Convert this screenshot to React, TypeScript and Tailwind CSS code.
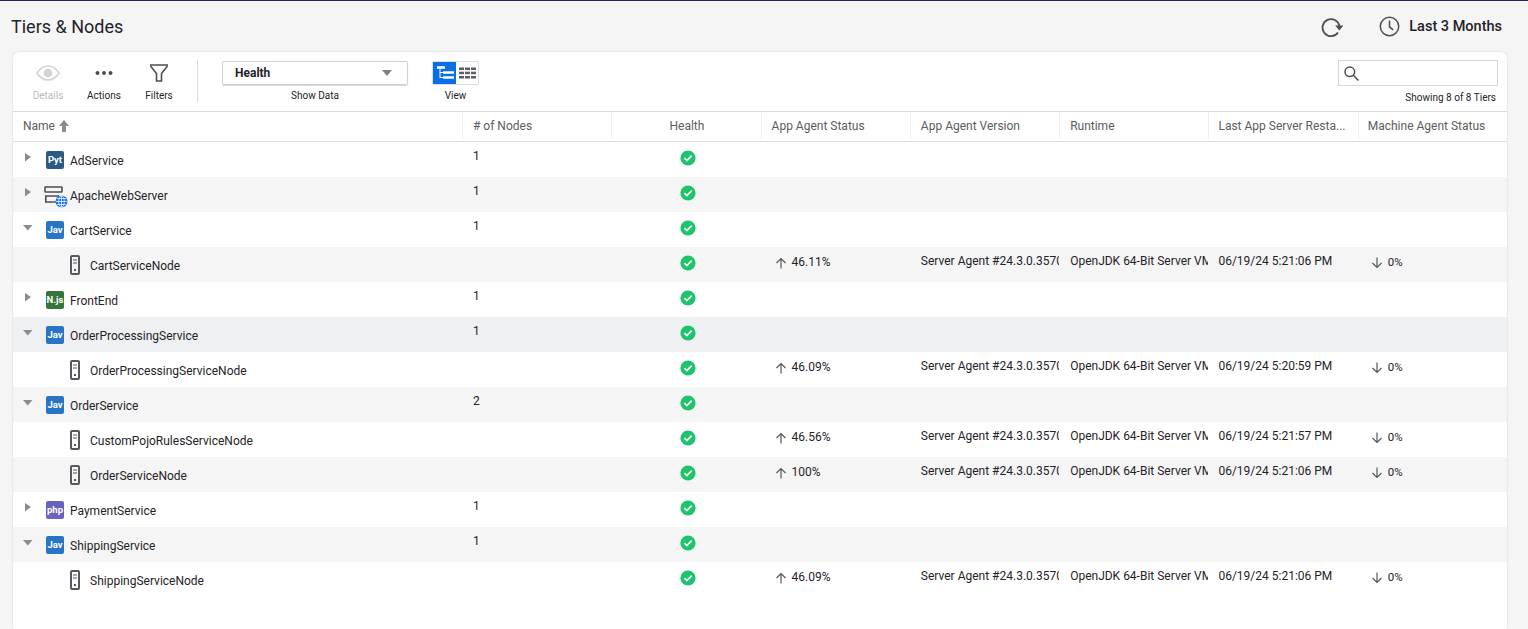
import React from "react";

type Row = {
  name: string;
  kind: "py" | "web" | "jav" | "njs" | "php" | "node";
  open?: boolean;
  count?: string;
  bg: string;
  status?: string;
  time?: string;
};

const rows: Row[] = [
  { name: "AdService", kind: "py", count: "1", bg: "bg-white" },
  { name: "ApacheWebServer", kind: "web", count: "1", bg: "bg-[#f5f5f5]" },
  { name: "CartService", kind: "jav", open: true, count: "1", bg: "bg-white" },
  { name: "CartServiceNode", kind: "node", bg: "bg-[#f5f5f5]", status: "46.11%", time: "06/19/24 5:21:06 PM" },
  { name: "FrontEnd", kind: "njs", count: "1", bg: "bg-white" },
  { name: "OrderProcessingService", kind: "jav", open: true, count: "1", bg: "bg-[#eff0f2]" },
  { name: "OrderProcessingServiceNode", kind: "node", bg: "bg-white", status: "46.09%", time: "06/19/24 5:20:59 PM" },
  { name: "OrderService", kind: "jav", open: true, count: "2", bg: "bg-[#f5f5f5]" },
  { name: "CustomPojoRulesServiceNode", kind: "node", bg: "bg-white", status: "46.56%", time: "06/19/24 5:21:57 PM" },
  { name: "OrderServiceNode", kind: "node", bg: "bg-[#f5f5f5]", status: "100%", time: "06/19/24 5:21:06 PM" },
  { name: "PaymentService", kind: "php", count: "1", bg: "bg-white" },
  { name: "ShippingService", kind: "jav", open: true, count: "1", bg: "bg-[#f5f5f5]" },
  { name: "ShippingServiceNode", kind: "node", bg: "bg-white", status: "46.09%", time: "06/19/24 5:21:06 PM" },
];

function Badge({ label, color }: { label: string; color: string }) {
  return (
    <span className={`flex h-[18px] w-[18px] shrink-0 items-center justify-center rounded-[2px] text-[9.5px] font-bold leading-none text-white ${color}`}>
      {label}
    </span>
  );
}

function WebIcon() {
  return (
    <svg width="24" height="22" viewBox="0 0 24 22" className="shrink-0" fill="none">
      <rect x="1" y="1" width="17" height="5" rx="0.5" stroke="#4b4f54" strokeWidth="1.6" />
      <path d="M15 10H1.8v6H12" stroke="#4b4f54" strokeWidth="1.6" />
      <circle cx="17.5" cy="15.5" r="6" fill="#1a73e8" />
      <path d="M11.8 15.5h11.4M17.5 9.8v11.4M13 12.5h9M13 18.5h9" stroke="#fff" strokeWidth="0.7" />
      <ellipse cx="17.5" cy="15.5" rx="2.8" ry="5.7" stroke="#fff" strokeWidth="0.7" />
    </svg>
  );
}

function NodeIcon() {
  return (
    <svg width="10" height="20" viewBox="0 0 10 20" className="shrink-0" fill="none">
      <rect x="1" y="1" width="8" height="18" rx="1" stroke="#55585c" strokeWidth="2" />
      <path d="M3 5h4M3 8h4" stroke="#55585c" strokeWidth="1.2" />
      <rect x="4" y="14" width="2" height="2" fill="#55585c" />
    </svg>
  );
}

function Caret({ open }: { open?: boolean }) {
  return open ? (
    <svg width="10" height="6" viewBox="0 0 10 6" className="block"><path d="M0 0h9.5L4.8 5.500z" fill="#8a8d90" /></svg>
  ) : (
    <svg width="8" height="10" viewBox="0 0 8 10" className="block"><path d="M1 1l6 4-6 4.500z" fill="#8a8d90" /></svg>
  );
}

function Check() {
  return (
    <svg width="16" height="16" viewBox="0 0 16 16">
      <circle cx="8" cy="8" r="7.6" fill="#1ec46b" />
      <path d="M4.4 8.2l2.5 2.4 4.800-4.900" fill="none" stroke="#fff" strokeWidth="1.7" />
    </svg>
  );
}

function Arrow({ up }: { up?: boolean }) {
  return (
    <svg width="12" height="12" viewBox="0 0 12 12" className="shrink-0" fill="none" stroke="#55585c" strokeWidth="1.2">
      {up ? <path d="M6 11.5V1.500M1.500 6L6 1.500 10.500 6" /> : <path d="M6 .5v10M1.500 6L6 10.500 10.500 6" />}
    </svg>
  );
}

function NameCell({ row }: { row: Row }) {
  if (row.kind === "node") {
    return (
      <div className="flex h-full items-center pl-[57px]">
        <NodeIcon />
        <span className="ml-[10px] pt-[2px]">{row.name}</span>
      </div>
    );
  }
  return (
    <div className="relative flex h-full items-center pl-[33px]">
      <span className={row.open ? "absolute left-[10px] top-[13px]" : "absolute left-[11px] top-[10px]"}>
        <Caret open={row.open} />
      </span>
      {row.kind === "web" ? (
        <span className="-ml-[2px] mr-[2px] mt-[4px] flex w-[24px]"><WebIcon /></span>
      ) : (
        <span className="mr-[6px] mt-[1px] flex">
          {row.kind === "py" && <Badge label="Pyt" color="bg-[#2b5b84]" />}
          {row.kind === "jav" && <Badge label="Jav" color="bg-[#2775c4]" />}
          {row.kind === "njs" && <Badge label="N.js" color="bg-[#33763a]" />}
          {row.kind === "php" && <Badge label="php" color="bg-[#6a62c0]" />}
        </span>
      )}
      <span className="pt-[2px]">{row.name}</span>
    </div>
  );
}

const headers = ["# of Nodes", "Health", "App Agent Status", "App Agent Version", "Runtime", "Last App Server Resta...", "Machine Agent Status"];

export default function App() {
  return (
    <div className="flex h-[629px] flex-col overflow-hidden border-t border-[#2a2257] bg-[#f5f5f5] font-['Roboto',sans-serif] text-[#1f2328]">
      <header className="flex h-[51px] shrink-0 items-center justify-between pl-[11px] pr-[26px]">
        <h1 className="text-[18px] font-normal">Tiers &amp; Nodes</h1>
        <div className="flex items-center">
          <svg width="22" height="22" viewBox="0 0 22 22" fill="none" stroke="#4b4f54" strokeWidth="1.8" className="mr-[36px]">
            <path d="M17 16.500A8.500 8.500 0 1 1 18.400 10" />
            <path d="M14.200 9.500h8.300L18.300 14.500z" fill="#4b4f54" stroke="none" />
          </svg>
          <svg width="21" height="21" viewBox="0 0 21 21" fill="none" stroke="#4b4f54" strokeWidth="1.5" className="mr-[9px]">
            <circle cx="10.500" cy="10.500" r="9.200" />
            <path d="M10.500 4.500v6.300l3.600 3" />
          </svg>
          <span className="text-[14.5px] font-medium">Last 3 Months</span>
        </div>
      </header>

      <main className="ml-[13px] mr-[21px] flex min-h-0 flex-1 flex-col rounded-t-[6px] bg-white shadow-[0_0_2px_#c9cbd0]">
        <div className="flex h-[60px] shrink-0 border-b border-[#dcdde0]">
          <div className="flex w-[184px] shrink-0 items-start pl-[12px] pt-[10px]">
            <ToolButton label="Details" width="w-[46px]" muted>
              <svg width="24" height="16" viewBox="0 0 24 16" fill="none">
                <path d="M1 8c3-4.600 6.600-7 11-7s8 2.400 11 7c-3 4.600-6.600 7-11 7S4 12.600 1 8z" stroke="#d2d3d5" strokeWidth="1.5" />
                <circle cx="12" cy="8" r="4.300" fill="#d2d3d5" />
              </svg>
            </ToolButton>
            <ToolButton label="Actions" width="w-[56px] ml-[5px]">
              <svg width="18" height="16" viewBox="0 0 18 16" fill="#4b4f54">
                <circle cx="2.500" cy="8" r="2" /><circle cx="9" cy="8" r="2" /><circle cx="15.500" cy="8" r="2" />
              </svg>
            </ToolButton>
            <ToolButton label="Filters" width="w-[54px]">
              <svg width="20" height="18" viewBox="0 0 20 18" fill="none" stroke="#4b4f54" strokeWidth="1.6">
                <path d="M1 1h18M1.500 2l6 7.500V17h5V9.500l6-7.500" />
              </svg>
            </ToolButton>
          </div>
          <div className="mt-[8px] h-[42px] w-px bg-[#dcdde0]" />
          <div className="ml-[24px] flex w-[186px] flex-col items-center pt-[9px]">
            <div className="flex h-[24px] w-full items-center justify-between rounded-[2px] border border-[#cfd0d3] pl-[12px] pr-[15px] shadow-[0_1px_1px_#d5d6d8]">
              <span className="text-[12px] font-bold leading-none">Health</span>
              <svg width="10" height="6" viewBox="0 0 10 6"><path d="M0 0h10L5 6z" fill="#7d8084" /></svg>
            </div>
            <span className="mt-[4px] text-[10px] leading-[13px]">Show Data</span>
          </div>
          <div className="ml-[24px] flex w-[47px] flex-col items-center pt-[9px]">
            <div className="flex h-[24px] w-[47px] shrink-0 rounded-[2px] border border-[#dcdde0]">
              <span className="flex w-[23px] items-center justify-center bg-[#0a6ee8]">
                <svg width="18" height="14" viewBox="0 0 18 14" fill="none" stroke="#fff">
                  <path d="M1 1.500h8" strokeWidth="2.500" />
                  <path d="M4 3v9M4 6.500h3M4 11.500h3" strokeWidth="1" />
                  <path d="M7 6.500h11M7 11.500h11" strokeWidth="2.500" />
                </svg>
              </span>
              <span className="flex flex-1 items-center justify-center">
                <svg width="17" height="12" viewBox="0 0 17 12" fill="#5b5e62">
                  <rect x="0" y="0.500" width="5" height="2.500" /><rect x="6" y="0.500" width="5" height="2.500" /><rect x="12" y="0.500" width="5" height="2.500" />
                  <rect x="0" y="4.700" width="5" height="2.500" /><rect x="6" y="4.700" width="5" height="2.500" /><rect x="12" y="4.700" width="5" height="2.500" />
                  <rect x="0" y="9" width="5" height="2.500" /><rect x="6" y="9" width="5" height="2.500" /><rect x="12" y="9" width="5" height="2.500" />
                </svg>
              </span>
            </div>
            <span className="mt-[4px] text-[10px] leading-[13px]">View</span>
          </div>
          <div className="ml-auto flex flex-col items-end pr-[9px] pt-[8px]">
            <div className="flex h-[26px] w-[160px] items-center border border-[#d5d6d9] pl-[5px]">
              <svg width="15" height="15" viewBox="0 0 15 15" fill="none" stroke="#4b4f54" strokeWidth="1.5">
                <circle cx="5.800" cy="5.800" r="4.800" /><path d="M9.300 9.300L14.500 14.500" />
              </svg>
            </div>
            <span className="mr-[2px] mt-[5px] text-[10px] leading-[13px]">Showing 8 of 8 Tiers</span>
          </div>
        </div>

        <div className="grid h-[30px] shrink-0 grid-cols-[449px_repeat(7,1fr)] border-b border-[#dcdde0] pb-[2px] text-[12px] text-[#5a5d61]">
          <div className="flex items-center gap-[4px] pl-[10px]">
            Name
            <svg width="10" height="12" viewBox="0 0 10 12" fill="#8a8d90"><path d="M5 0L10 6H7v6H3V6H0z" /></svg>
          </div>
          {headers.map((h, i) => (
            <div key={h} className={`flex items-center whitespace-nowrap border-l border-[#eeeff1] ${i === 1 ? "justify-center pl-[1px]" : i >= 5 ? "pl-[9px]" : "pl-[10px]"}`}>
              {h}
            </div>
          ))}
        </div>

        <div className="min-h-0 flex-1">
          {rows.map((r) => (
            <div key={r.name} className={`grid h-[35px] grid-cols-[449px_repeat(7,1fr)] text-[12px] leading-[14px] ${r.bg}`}>
              <NameCell row={r} />
              <div className="pl-[11px] pt-[7px]">{r.count}</div>
              <div className="flex justify-center pl-[5px] pt-[8px]"><Check /></div>
              <div className="flex items-start gap-[5px] pl-[14px] pt-[8px]">
                {r.status && <><span className="pt-[2px]"><Arrow up /></span><span>{r.status}</span></>}
              </div>
              <div className="overflow-hidden whitespace-nowrap pl-[11px] pt-[7px]">{r.status && "Server Agent #24.3.0.35702"}</div>
              <div className="overflow-hidden whitespace-nowrap pl-[11px] pt-[7px]">{r.status && "OpenJDK 64-Bit Server VM"}</div>
              <div className="pl-[10px] pt-[7px]">{r.time}</div>
              <div className="flex items-start gap-[5px] pl-[13px] pt-[8px] text-[11.5px]">
                {r.status && <><span className="pt-[2px]"><Arrow /></span><span>0%</span></>}
              </div>
            </div>
          ))}
        </div>
      </main>
    </div>
  );
}

function ToolButton({ label, width, muted, children }: { label: string; width: string; muted?: boolean; children: React.ReactNode }) {
  return (
    <div className={`flex flex-col items-center ${width}`}>
      <div className="flex h-[22px] items-center">{children}</div>
      <span className={`mt-[5px] text-[10px] leading-[13px] ${muted ? "text-[#b9babd]" : ""}`}>{label}</span>
    </div>
  );
}
